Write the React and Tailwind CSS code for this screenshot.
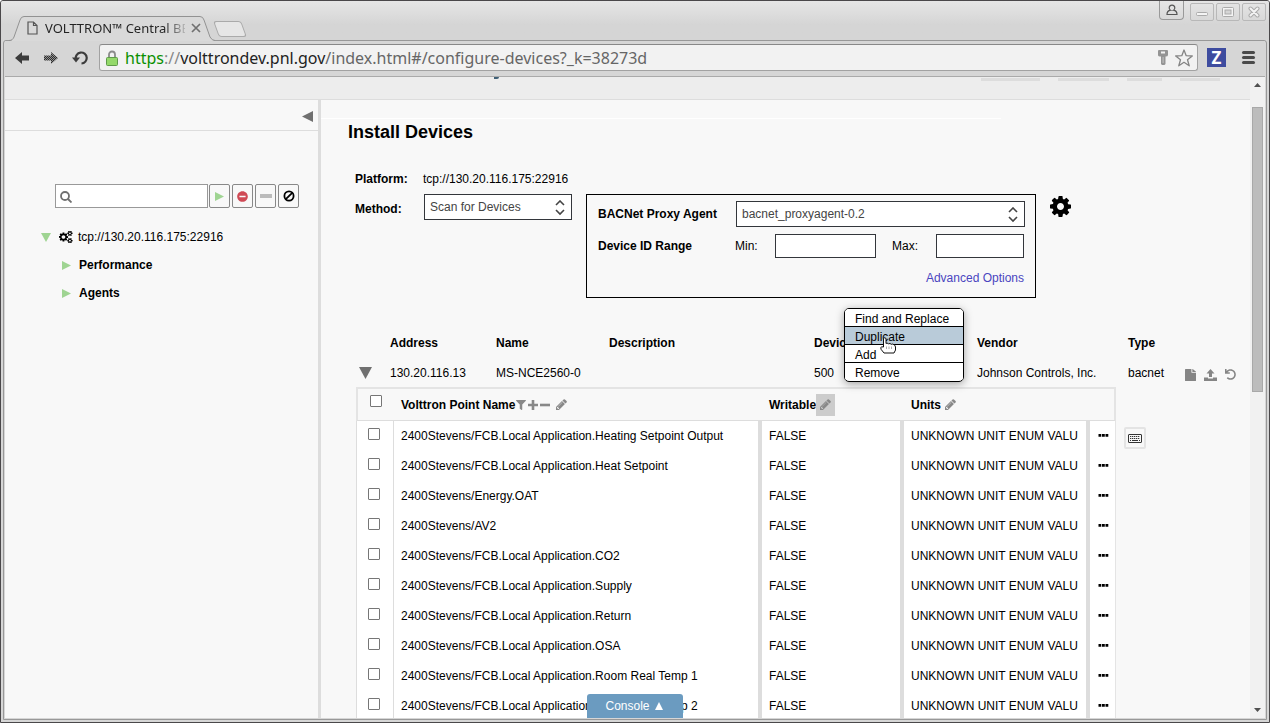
import React from "react";
import { FaFilter, FaFile, FaUndo, FaMinusCircle } from "react-icons/fa";

const points = [
  "2400Stevens/FCB.Local Application.Heating Setpoint Output",
  "2400Stevens/FCB.Local Application.Heat Setpoint",
  "2400Stevens/Energy.OAT",
  "2400Stevens/AV2",
  "2400Stevens/FCB.Local Application.CO2",
  "2400Stevens/FCB.Local Application.Supply",
  "2400Stevens/FCB.Local Application.Return",
  "2400Stevens/FCB.Local Application.OSA",
  "2400Stevens/FCB.Local Application.Room Real Temp 1",
  "2400Stevens/FCB.Local Application.Room Real Temp 2",
];

const checkbox = "block size-3 appearance-none rounded-[1px] border border-[#767676] bg-white";

function Triangle({ dir, className }) {
  const d = { right: "M0 0 10 5 0 10Z", down: "M0 0H10L5 10Z", left: "M10 0V10L0 5Z", up: "M5 0 10 10H0Z" }[dir];
  return (
    <svg viewBox="0 0 10 10" preserveAspectRatio="none" className={className} fill="currentColor" aria-hidden="true">
      <path d={d} />
    </svg>
  );
}

function Pencil() {
  return (
    <svg viewBox="128 128 1536 1536" className="size-[11px]" fill="currentColor" aria-hidden="true">
      <path d="M491 1536l91-91-235-235-91 91v107h128v128h107zm523-928q0-22-22-22-10 0-17 7l-542 542q-7 7-7 17 0 22 22 22 10 0 17-7l542-542q7-7 7-17zm-54-192l416 416-832 832h-416v-416zm683 96q0 53-37 90l-166 166-416-416 166-165q36-38 90-38 53 0 91 38l235 234q37 39 37 91z" />
    </svg>
  );
}

function Cog({ className }) {
  return (
    <svg viewBox="128 128 1536 1536" className={className} fill="currentColor" aria-hidden="true">
      <path d="M1152 896q0-106-75-181t-181-75-181 75-75 181 75 181 181 75 181-75 75-181zm512-109v222q0 12-8 23t-20 13l-185 28q-19 54-39 91 35 50 107 138 10 12 10 25t-9 23q-27 37-99 108t-94 71q-12 0-26-9l-138-108q-44 23-91 38-16 136-29 186-7 28-36 28h-222q-14 0-24.5-8.5t-11.5-21.5l-28-184q-49-16-90-37l-141 107q-10 9-25 9-14 0-25-11-126-114-165-168-7-10-7-23 0-12 8-23 15-21 51-66.5t54-70.5q-27-50-41-99l-183-27q-13-2-21-12.5t-8-23.5v-222q0-12 8-23t19-13l186-28q14-46 39-92-40-57-107-138-10-12-10-24 0-10 9-23 26-36 98.5-107.5t94.5-71.5q13 0 26 10l138 107q44-23 91-38 16-136 29-186 7-28 36-28h222q14 0 24.5 8.5t11.5 21.5l28 184q49 16 90 37l142-107q9-9 24-9 13 0 25 10 129 119 165 170 7 8 7 22 0 12-8 23-15 21-51 66.5t-54 70.5q26 50 41 98l183 28q13 2 21 12.5t8 23.5z" />
    </svg>
  );
}

function Cogs({ className }) {
  return (
    <svg viewBox="0 64 1856 1664" className={className} fill="currentColor" aria-hidden="true">
      <path d="M832 896q0-106-75-181t-181-75-181 75-75 181 75 181 181 75 181-75 75-181zm768 512q0-52-38-90t-90-38-90 38-38 90q0 53 37.5 90.5t90.5 37.5 90.5-37.5 37.5-90.5zm0-1024q0-52-38-90t-90-38-90 38-38 90q0 53 37.5 90.5t90.5 37.5 90.5-37.5 37.5-90.5zm-384 421v185q0 10-7 19.5t-16 10.5l-155 24q-11 35-32 76 34 48 90 115 7 11 7 20 0 12-7 19-23 30-82.5 89.5t-78.5 59.5q-11 0-21-7l-115-90q-37 19-77 31-11 108-23 155-7 24-30 24h-186q-11 0-20-7.5t-10-17.5l-23-153q-34-10-75-31l-118 89q-7 7-20 7-11 0-21-8-144-133-144-160 0-9 7-19 10-14 41-53t47-61q-23-44-35-82l-152-24q-10-1-17-9.5t-7-19.5v-185q0-10 7-19.5t16-10.5l155-24q11-35 32-76-34-48-90-115-7-11-7-20 0-12 7-20 22-30 82-89t79-59q11 0 21 7l115 90q34-18 77-32 11-108 23-154 7-24 30-24h186q11 0 20 7.5t10 17.5l23 153q34 10 75 31l118-89q8-7 20-7 11 0 21 8 144 133 144 160 0 8-7 19-12 16-42 54t-45 60q23 48 34 82l152 23q10 2 17 10.5t7 19.5zm640 533v140q0 16-149 31-12 27-30 52 51 113 51 138 0 4-4 7-122 71-124 71-8 0-46-47t-52-68q-20 2-30 2t-30-2q-14 21-52 68t-46 47q-2 0-124-71-4-3-4-7 0-25 51-138-18-25-30-52-149-15-149-31v-140q0-16 149-31 13-29 30-52-51-113-51-138 0-4 4-7 4-2 35-20t59-34 30-16q8 0 46 46.5t52 67.5q20-2 30-2t30 2q51-71 92-112l6-2q4 0 124 70 4 3 4 7 0 25-51 138 17 23 30 52 149 15 149 31zm0-1024v140q0 16-149 31-12 27-30 52 51 113 51 138 0 4-4 7-122 71-124 71-8 0-46-47t-52-68q-20 2-30 2t-30-2q-14 21-52 68t-46 47q-2 0-124-71-4-3-4-7 0-25 51-138-18-25-30-52-149-15-149-31v-140q0-16 149-31 13-29 30-52-51-113-51-138 0-4 4-7 4-2 35-20t59-34 30-16q8 0 46 46.5t52 67.5q20-2 30-2t30 2q51-71 92-112l6-2q4 0 124 70 4 3 4 7 0 25-51 138 17 23 30 52 149 15 149 31z" />
    </svg>
  );
}

function SelectBox({ id, value, className }) {
  return (
    <span className={`relative block ${className}`}>
      <select id={id} defaultValue={value} className="block h-[26px] w-full appearance-none border border-[#33363b] bg-white pl-[5px] text-[12px] text-[#444]">
        <option>{value}</option>
      </select>
      <svg viewBox="0 0 10 16" className="pointer-events-none absolute right-[7px] top-[6px] h-4 w-[10px]" fill="none" stroke="#444" strokeWidth="1.6" aria-hidden="true">
        <path d="M1 5 5 1 9 5M1 10 5 14 9 10" />
      </svg>
    </span>
  );
}

function TitleBar() {
  return (
    <div className="flex h-[39px] shrink-0 justify-between bg-linear-to-b from-[#e6e6e6] to-[#d5d5d5] to-60%">
      <div className="flex pl-2 pt-[15px]">
        <div className="relative flex h-6 w-[206px] items-center">
          <svg viewBox="0 0 206 25" className="absolute left-0 top-0 z-10 h-[25px] w-[206px]" aria-hidden="true">
            <path d="M0 25C3 25 4 23 5 21L11 4Q12 .5 15 .5H191Q194 .5 195 4L201 21Q203 24.500 206 25Z" fill="#d9d9d9" />
            <path d="M0 24.500C3 24.500 4 23 5 21L11 4Q12 .5 15 .5H191Q194 .5 195 4L201 21Q203 24.500 206 24.500" fill="none" stroke="#929292" />
          </svg>
          <div className="relative z-20 flex w-full items-center pl-[18px]">
            <svg viewBox="0 0 11 14" className="h-[14px] w-[11px]" fill="none" stroke="#555" strokeWidth="1.2" aria-hidden="true">
              <path d="M1 1H6.500L10 4.500V13H1ZM6.500 1V4.500H10" />
            </svg>
            <span className="ml-[7px] w-[140px] overflow-hidden whitespace-nowrap bg-linear-to-r from-[#222] from-85% to-[#bbb] bg-clip-text font-['Noto_Sans'] text-[13px] leading-5 text-transparent">VOLTTRON™ Central BE</span>
            <button aria-label="Close tab" className="ml-[6px]">
              <svg viewBox="0 0 10 10" className="size-[10px]" stroke="#707070" strokeWidth="1.700" aria-hidden="true"><path d="M1 1 9 9M9 1 1 9" /></svg>
            </button>
          </div>
        </div>
        <button aria-label="New tab" className="ml-px mt-[5px] h-4 w-7 skew-x-[20deg] rounded-[3px] border border-[#aaa] bg-[#e6e6e6]" />
      </div>
      <div className="flex pr-[3px]">
        <button aria-label="Profile" className="mr-[6px] flex h-[19px] w-[25px] items-center justify-center rounded-b border border-t-0 border-[#999]">
          <svg viewBox="0 0 12 12" className="size-3" fill="none" stroke="#555" strokeWidth="1.2" aria-hidden="true"><path d="M4.500 6.200A2.800 2.800 0 1 1 7.500 6.200C10 6.600 11 8 11 10.500H1C1 8 2 6.600 4.500 6.200Z" /></svg>
        </button>
        <div className="mt-[2px] flex gap-[2px]">
          <button aria-label="Minimize" className="flex h-[18px] w-6 items-center justify-center rounded-[2px] border border-[#b8b8b8]">
            <svg viewBox="0 0 12 12" className="size-3" fill="#f4f4f4" stroke="#aaa" aria-hidden="true"><rect x=".5" y="6.500" width="11" height="3" rx="1" /></svg>
          </button>
          <button aria-label="Maximize" className="flex h-[18px] w-6 items-center justify-center rounded-[2px] border border-[#b8b8b8]">
            <svg viewBox="0 0 12 12" className="size-3" fill="#f4f4f4" stroke="#aaa" aria-hidden="true"><rect x=".5" y="1.500" width="11" height="9" rx="1" /><rect x="3" y="4" width="6" height="4" fill="#d5d5d5" /></svg>
          </button>
          <button aria-label="Close" className="flex h-[18px] w-6 items-center justify-center rounded-[2px] border border-[#b8b8b8]">
            <svg viewBox="0 0 12 12" className="size-3" strokeLinecap="round" aria-hidden="true"><path d="M2.500 2.500 9.500 9.500M9.500 2.500 2.500 9.500" stroke="#aaa" strokeWidth="4" /><path d="M2.500 2.500 9.500 9.500M9.500 2.500 2.500 9.500" stroke="#f4f4f4" strokeWidth="2" /></svg>
          </button>
        </div>
      </div>
    </div>
  );
}

function Toolbar() {
  return (
    <div className="flex h-9 shrink-0 items-center border-b border-[#aaa] bg-[#d6d6d6] px-[10px] pb-[2px]">
      <button aria-label="Back">
        <svg viewBox="0 0 15 12" className="h-3 w-[15px]" fill="#3c3c3c" aria-hidden="true"><path d="M0 6 7 0V3.500H14V8.500H7V12Z" /></svg>
      </button>
      <button aria-label="Forward" className="ml-[13px]">
        <svg viewBox="0 0 15 12" className="h-3 w-[15px]" aria-hidden="true">
          <defs>
            <pattern id="hatch" width="2" height="2" patternUnits="userSpaceOnUse">
              <rect width="2" height="2" fill="#8f8f8f" /><path d="M0 0h1v1H0zM1 1h1v1H1z" fill="#2e2e2e" />
            </pattern>
          </defs>
          <path d="M15 6 8 0V3.500H1V8.500H8V12Z" fill="url(#hatch)" />
        </svg>
      </button>
      <button aria-label="Reload" className="ml-[14px]">
        <svg viewBox="0 0 16 14" className="h-[14px] w-4" fill="none" aria-hidden="true"><path d="M3.800 8A5.500 5.500 0 1 1 9.500 12.500" stroke="#3c3c3c" strokeWidth="2.200" /><path d="M0 6.500H8L4 11.500Z" fill="#3c3c3c" /></svg>
      </button>
      <div className="ml-[11px] flex h-[27px] flex-1 items-center rounded-[3px] border border-[#a2a2a2] border-t-[#888] bg-[#f2f2f2] pl-[6px] pr-1">
        <svg viewBox="0 0 12 16" className="h-4 w-3 shrink-0" aria-hidden="true">
          <path d="M3 8V4.500a3 3 0 0 1 6 0V8" fill="none" stroke="#8b8b8b" strokeWidth="1.800" />
          <rect x=".5" y="7.500" width="11" height="8" rx="1" fill="#94d96a" stroke="#5f9a4a" />
        </svg>
        <div aria-label="Address" className="ml-[7px] flex-1 whitespace-nowrap font-['Noto_Sans'] text-[16px] leading-6 text-[#666]">
          <span className="text-[#0a9000]">https</span><span className="text-[#888]">://</span><span className="text-[#222]">volttrondev.pnl.gov</span>/index.html#/configure-devices?_k=38273d
        </div>
        <svg viewBox="0 0 10 15" className="h-[15px] w-[10px]" aria-hidden="true"><path fillRule="evenodd" d="M1 0H9Q10 0 10 1V5Q10 6.500 7.500 6.500V14L6.500 15H4L3 14V6.500Q0 6.500 0 5V1Q0 0 1 0ZM3 1.500V3.500H7V1.500ZM4.800 7V13H5.300V7Z" fill="#949494" /></svg>
        <svg viewBox="0 0 18 18" className="ml-[7px] size-[18px]" fill="none" stroke="#858585" strokeWidth="1.300" strokeLinejoin="round" aria-hidden="true"><path d="M9 1 11.200 6.700 17.300 7 12.500 10.800 14.200 16.800 9 13.300 3.800 16.800 5.500 10.800 .7 7 6.800 6.700Z" /></svg>
      </div>
      <button className="ml-[9px] size-[19px] bg-[#3e4c9f] text-center font-['Open_Sans'] text-[17px] font-bold leading-[19px] text-white">Z</button>
      <button aria-label="Menu" className="ml-4 flex flex-col gap-[2px]">
        <span className="h-[3px] w-[13px] rounded-full bg-[#4a4a4a]" />
        <span className="h-[3px] w-[13px] rounded-full bg-[#4a4a4a]" />
        <span className="h-[3px] w-[13px] rounded-full bg-[#4a4a4a]" />
      </button>
    </div>
  );
}

const toolButton = "flex h-6 w-[21px] items-center justify-center rounded-[2px] border border-[#888]";

function Sidebar() {
  return (
    <aside className="w-[316px] shrink-0 border-r-[3px] border-[#ddd]">
      <div className="flex h-[31px] items-center justify-end border-b border-[#ddd] pr-[5px] pt-[2px]">
        <button aria-label="Collapse panel"><Triangle dir="left" className="h-[11px] w-[11px] text-[#707070]" /></button>
      </div>
      <div className="ml-[50px] mt-[53px] flex gap-[2px]">
        <label className="-mr-px flex h-6 w-[153px] items-center border border-[#999] bg-white pl-1 pt-px">
          <svg viewBox="0 0 12 12" className="size-3 shrink-0" fill="none" stroke="#707070" strokeWidth="1.800" aria-hidden="true"><circle cx="5" cy="5" r="4" /><path d="M8 8 11.500 11.500" /></svg>
          <input aria-label="Search" className="w-full min-w-0 px-1 outline-none" />
        </label>
        <button aria-label="Running" className={toolButton}><Triangle dir="right" className="h-[9px] w-[9px] text-[#9fd492]" /></button>
        <button aria-label="Errors" className={toolButton}><FaMinusCircle className="size-[11px] text-[#cf4a55]" /></button>
        <button aria-label="Unknown" className={toolButton}><span className="h-1 w-3 bg-[#bbb]" /></button>
        <button aria-label="Clear filter" className={toolButton}>
          <svg viewBox="0 0 12 12" className="size-3" fill="none" stroke="#000" strokeWidth="1.800" aria-hidden="true"><circle cx="6" cy="6" r="4.600" /><path d="M2.800 9.200 9.200 2.800" /></svg>
        </button>
      </div>
      <ul className="mt-[15px] pl-[36px] leading-7">
        <li>
          <div className="flex items-center">
            <Triangle dir="down" className="h-[9px] w-[10px] text-[#9fd492]" />
            <Cogs className="ml-2 h-3 w-[14px]" />
            <span className="ml-[5px]">tcp://130.20.116.175:22916</span>
          </div>
          <ul className="pl-[21px] font-bold">
            <li className="flex items-center gap-2"><Triangle dir="right" className="h-[9px] w-[9px] text-[#9fd492]" />Performance</li>
            <li className="flex items-center gap-2"><Triangle dir="right" className="h-[9px] w-[9px] text-[#9fd492]" />Agents</li>
          </ul>
        </li>
      </ul>
    </aside>
  );
}

function DeviceForm() {
  return (
    <form className="mt-[27px] pl-[34px]">
      <div className="flex leading-5">
        <span className="w-[68px] font-bold">Platform:</span>
        <span>tcp://130.20.116.175:22916</span>
      </div>
      <div className="mt-[5px] flex items-start">
        <label htmlFor="method" className="mt-[5px] w-[69px] font-bold leading-5">Method:</label>
        <SelectBox id="method" value="Scan for Devices" className="w-[148px]" />
        <div className="ml-[14px] w-[450px] border border-black pb-[9px] pl-[11px] pr-[10px] pt-[6px]">
          <div className="flex items-center">
            <label htmlFor="proxy" className="w-[138px] font-bold">BACNet Proxy Agent</label>
            <SelectBox id="proxy" value="bacnet_proxyagent-0.2" className="flex-1" />
          </div>
          <div className="mt-[7px] flex items-center pr-px">
            <span className="w-[137px] font-bold">Device ID Range</span>
            <label htmlFor="min" className="w-10">Min:</label>
            <input id="min" className="h-6 w-[101px] border border-[#33363b] bg-white px-1" />
            <label htmlFor="max" className="ml-4 w-11">Max:</label>
            <input id="max" className="h-6 min-w-0 flex-1 border border-[#33363b] bg-white px-1" />
          </div>
          <div className="mt-[10px] pr-px text-right leading-5"><a href="#advanced" className="text-[#4a45c0]">Advanced Options</a></div>
        </div>
        <button type="button" aria-label="Settings" className="ml-[14px] mt-[2px]"><Cog className="size-[21px]" /></button>
      </div>
    </form>
  );
}

function DeviceTable() {
  return (
    <table className="ml-[35px] mt-[30px] table-fixed text-left">
      <colgroup>
        <col className="w-[34px]" /><col className="w-[106px]" /><col className="w-[113px]" /><col className="w-[205px]" />
        <col className="w-[163px]" /><col className="w-[151px]" /><col className="w-[57px]" /><col className="w-[60px]" />
      </colgroup>
      <thead>
        <tr className="h-[30px]">
          <th /><th>Address</th><th>Name</th><th>Description</th><th>Device ID</th><th>Vendor</th><th>Type</th><th />
        </tr>
      </thead>
      <tbody>
        <tr className="h-[29px]">
          <td><button aria-label="Collapse device" className="ml-[3px] block pt-px"><Triangle dir="down" className="h-3 w-[13px] text-[#707070]" /></button></td>
          <td>130.20.116.13</td><td>MS-NCE2560-0</td><td /><td>500</td><td>Johnson Controls, Inc.</td><td>bacnet</td>
          <td>
            <div className="flex items-center gap-2 pt-1 text-[#858585]">
              <button aria-label="Configure file"><FaFile className="h-3 w-[11px]" preserveAspectRatio="none" /></button>
              <button aria-label="Upload">
                <svg viewBox="0 0 13 12" className="h-3 w-[13px]" fill="currentColor" aria-hidden="true"><path d="M6.500 0 10.500 4.500H8V8H5V4.500H2.500ZM0 8.500H4V9.500H9V8.500H13V12H0Z" /></svg>
              </button>
              <button aria-label="Reload device"><FaUndo className="size-[11px]" /></button>
            </div>
          </td>
        </tr>
      </tbody>
    </table>
  );
}

function PointTable() {
  return (
    <div className="ml-[35px] flex items-start">
      <table className="w-[760px] table-fixed border-separate border-spacing-0 text-left">
        <colgroup>
          <col className="w-[38px]" /><col className="w-[368px]" /><col className="w-[142px]" /><col className="w-[186px]" /><col className="w-[26px]" />
        </colgroup>
        <thead>
          <tr className="h-[34px] *:border-b *:border-t-2 *:border-b-[#ddd] *:border-t-[#e4e4e4]">
            <th className="border-l-2 border-l-[#e4e4e4] pb-2 pl-3"><input type="checkbox" aria-label="Select all points" className={checkbox} /></th>
            <th className="pl-[7px]">
              <div className="flex items-center text-[#888]">
                <span className="text-black">Volttron Point Name</span>
                <button aria-label="Filter" className="ml-px"><FaFilter className="size-[10px]" /></button>
                <button aria-label="Add point" className="ml-[2px]">
                  <svg viewBox="0 0 10 10" className="size-[10px]" stroke="currentColor" strokeWidth="2.600" aria-hidden="true"><path d="M5 0V10M0 5H10" /></svg>
                </button>
                <button aria-label="Remove points" className="ml-[2px]">
                  <svg viewBox="0 0 10 10" className="size-[10px]" stroke="currentColor" strokeWidth="2.600" aria-hidden="true"><path d="M0 5H10" /></svg>
                </button>
                <button aria-label="Edit point names" className="ml-[6px]"><Pencil /></button>
              </div>
            </th>
            <th className="pl-[7px]">
              <div className="flex items-center text-[#888]">
                <span className="text-black">Writable</span>
                <button aria-label="Edit writable" className="flex h-[22px] w-[19px] items-center justify-center bg-[#ccc]"><Pencil /></button>
              </div>
            </th>
            <th className="pl-[7px]">
              <div className="flex items-center gap-1 text-[#888]">
                <span className="text-black">Units</span>
                <button aria-label="Edit units"><Pencil /></button>
              </div>
            </th>
            <th className="border-r-2 border-r-[#e4e4e4]" />
          </tr>
        </thead>
        <tbody className="bg-white">
          {points.map((name) => (
            <tr key={name} className="h-[30px]">
              <td className="border-l border-r border-[#ddd] pb-1 pl-[11px]"><input type="checkbox" aria-label={name} className={checkbox} /></td>
              <td className="whitespace-nowrap border-r-4 border-[#ddd] pl-[7px]">{name}</td>
              <td className="border-r-4 border-[#ddd] pl-[7px]">FALSE</td>
              <td className="whitespace-nowrap border-r-4 border-[#ddd] pl-[7px]">UNKNOWN UNIT ENUM VALU</td>
              <td className="border-r border-[#e4e4e4] pb-[2px] pl-2">
                <button aria-label="More" className="block">
                  <svg viewBox="0 0 11 3" className="h-[3px] w-[11px]" aria-hidden="true"><path d="M.5 0h2.800v2.800H.5zM4 0h2.800v2.800H4zM7.500 0h2.800v2.800H7.500z" /></svg>
                </button>
              </td>
            </tr>
          ))}
        </tbody>
      </table>
      <button aria-label="Keyboard shortcuts" className="ml-2 mt-10 flex h-[22px] w-[22px] items-center justify-center rounded-[2px] border-2 border-[#e4e4e4]">
        <svg viewBox="0 0 14 9" className="h-[9px] w-[14px] shrink-0" fill="none" stroke="#333" aria-hidden="true">
          <rect x=".5" y=".5" width="13" height="8" rx=".5" />
          <path d="M2 2.500H12M2 4.500H12" strokeDasharray="1.300 .7" /><path d="M2 6.500H3M4 6.500H10M11 6.500H12" />
        </svg>
      </button>
    </div>
  );
}

function ContextMenu() {
  const items = ["Find and Replace", "Duplicate", "Add", "Remove"];
  return (
    <div className="absolute left-[523px] top-[208px] w-[120px]">
      <ul className="overflow-hidden rounded-[5px] border border-black bg-white pb-px shadow-[0_2px_8px_rgba(0,0,0,0.35)]">
        {items.map((item) => (
          <li key={item} className="border-b border-black last:border-b-0">
            <button className={`block h-[17px] w-full pl-[10px] pt-[2px] text-left leading-[16px] ${item === "Duplicate" ? "bg-[#b9cbd9]" : "bg-white"}`}>{item}</button>
          </li>
        ))}
      </ul>
      <svg viewBox="0 0 17 17" className="absolute left-9 top-[29px] size-[17px]" aria-hidden="true">
        <path d="M3.500 10V2Q3.500 .7 4.700 .7T6 2V6.500L7 6 8.500 6.800 10 6.500 11.300 7.300 12.800 7Q15.500 8 15.500 10V13L14 16H4L1.200 12.500Q.2 10.500 1.500 9.800Z" fill="#fff" stroke="#111" strokeLinejoin="round" />
        <path d="M6.500 9.500V12M9 9.500V12M11.500 9.500V12" stroke="#999" strokeWidth=".8" />
      </svg>
    </div>
  );
}

export default function App() {
  return (
    <div className="h-screen bg-white">
      <div className="flex h-full flex-col overflow-hidden rounded-t-[3px] border border-[#4a484a] bg-[#d6d6d6] font-['Liberation_Sans',sans-serif] text-[12px] leading-4 text-black">
        <TitleBar />
        <div className="mx-[2px] mb-[2px] flex min-h-0 flex-1 flex-col rounded-t-[3px] border border-[#989898] px-px pb-px">
          <Toolbar />
          <div className="relative flex min-h-0 flex-1 bg-[#f8f8f8]">
            <div className="flex min-w-0 flex-1 flex-col overflow-hidden">
              <header className="flex h-[23px] shrink-0 items-start justify-between border-b border-[#ddd] bg-[#ededed] pl-[489px] pr-[30px]">
                <span className="h-[2px] w-[5px] rounded-br-sm bg-[#3f6076]" />
                <div className="flex gap-[18px] pt-px *:h-[3px] *:bg-[#ddd]">
                  <span className="w-[59px]" /><span className="w-[51px]" /><span className="w-[35px]" /><span className="w-10" />
                </div>
              </header>
              <div className="flex min-h-0 flex-1">
                <Sidebar />
                <main className="relative min-w-0 flex-1">
                  <div className="h-[19px] w-[680px] border-b border-white" />
                  <h1 className="mt-[3px] pl-[27px] text-[18px] font-bold leading-5">Install Devices</h1>
                  <DeviceForm />
                  <DeviceTable />
                  <PointTable />
                  <ContextMenu />
                </main>
              </div>
            </div>
            <div className="flex w-[15px] shrink-0 flex-col items-center bg-[#f1f1f1] py-[6px]">
              <Triangle dir="up" className="h-1 w-[7px] text-[#505050]" />
              <div className="mt-5 h-[285px] w-[11px] border border-[#a8a8a8] bg-[#bcbcbc]" />
              <Triangle dir="down" className="mt-auto h-1 w-[7px] text-[#505050]" />
            </div>
            <button className="absolute bottom-0 left-1/2 flex h-6 w-24 -translate-x-1/2 items-center justify-center gap-[5px] rounded-t-[3px] bg-[#6b9bc0] pr-[2px] text-white">Console <Triangle dir="up" className="size-2" /></button>
          </div>
        </div>
      </div>
    </div>
  );
}
